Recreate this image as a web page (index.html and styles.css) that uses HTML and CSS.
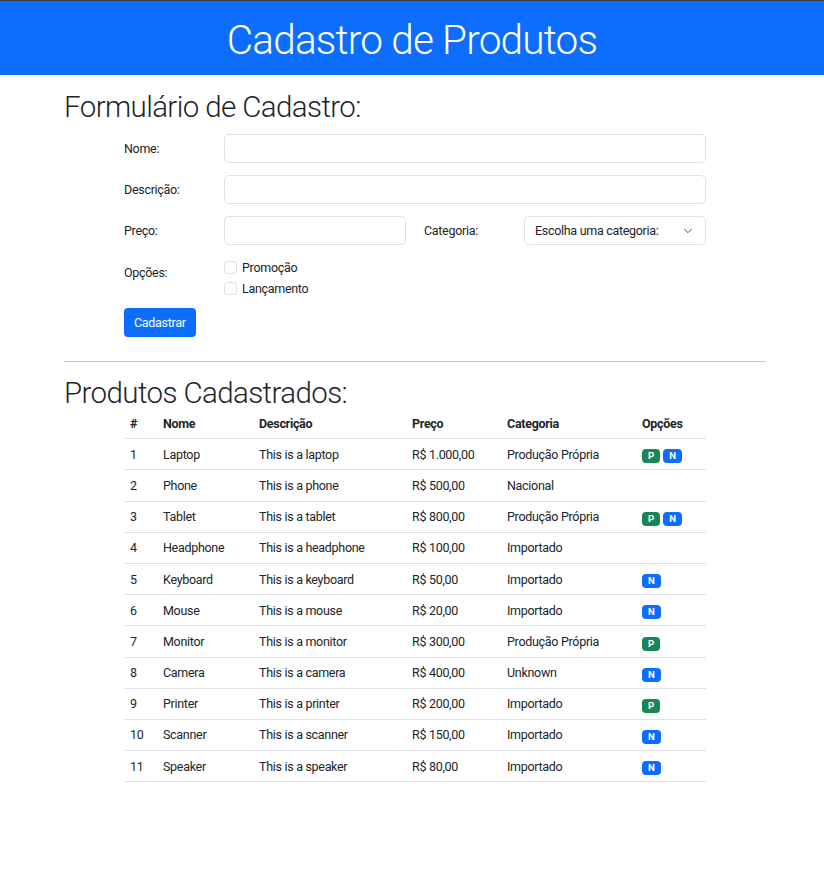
FILE: index.html
```html
<!DOCTYPE html>
<html lang="pt-BR">
<head>
<meta charset="utf-8">
<title>Cadastro de Produtos</title>
<link rel="stylesheet" href="styles.css">
</head>
<body>
<header class="topbar"><h1 class="topbar-title">Cadastro de Produtos</h1></header>
<main class="page">
  <h2 class="section-title first">Formulário de Cadastro:</h2>
  <form class="form">
    <div class="form-row">
      <label class="lbl">Nome:</label>
      <input class="field wide" type="text">
    </div>
    <div class="form-row">
      <label class="lbl">Descrição:</label>
      <input class="field wide" type="text">
    </div>
    <div class="form-row">
      <label class="lbl">Preço:</label>
      <input class="field half" type="text">
      <label class="lbl lbl-second">Categoria:</label>
      <div class="select">
        <span>Escolha uma categoria:</span>
        <svg class="chev" width="10" height="6" viewBox="0 0 10 6"><path d="M1.5 1.2l3.5 3.5 3.5-3.5" fill="none" stroke="#495057" stroke-width="1" stroke-linecap="round" stroke-linejoin="round"/></svg>
      </div>
    </div>
    <div class="form-row opts-row">
      <span class="lbl opts-lbl">Opções:</span>
      <div class="checks">
        <label class="check"><span class="box"></span>Promoção</label>
        <label class="check"><span class="box"></span>Lançamento</label>
      </div>
    </div>
    <button class="btn" type="button">Cadastrar</button>
  </form>
  <hr class="divider">
  <h2 class="section-title second">Produtos Cadastrados:</h2>
  <table class="products">
    <colgroup>
      <col class="c-id"><col class="c-name"><col class="c-desc"><col class="c-price"><col class="c-cat"><col class="c-opt">
    </colgroup>
    <thead>
      <tr><th>#</th><th>Nome</th><th>Descrição</th><th>Preço</th><th>Categoria</th><th>Opções</th></tr>
    </thead>
    <tbody>
      <tr><td>1</td><td>Laptop</td><td>This is a laptop</td><td>R$ 1.000,00</td><td>Produção Própria</td><td><span class="badge p">P</span><span class="badge n">N</span></td></tr>
      <tr><td>2</td><td>Phone</td><td>This is a phone</td><td>R$ 500,00</td><td>Nacional</td><td></td></tr>
      <tr><td>3</td><td>Tablet</td><td>This is a tablet</td><td>R$ 800,00</td><td>Produção Própria</td><td><span class="badge p">P</span><span class="badge n">N</span></td></tr>
      <tr><td>4</td><td>Headphone</td><td>This is a headphone</td><td>R$ 100,00</td><td>Importado</td><td></td></tr>
      <tr><td>5</td><td>Keyboard</td><td>This is a keyboard</td><td>R$ 50,00</td><td>Importado</td><td><span class="badge n">N</span></td></tr>
      <tr><td>6</td><td>Mouse</td><td>This is a mouse</td><td>R$ 20,00</td><td>Importado</td><td><span class="badge n">N</span></td></tr>
      <tr><td>7</td><td>Monitor</td><td>This is a monitor</td><td>R$ 300,00</td><td>Produção Própria</td><td><span class="badge p">P</span></td></tr>
      <tr><td>8</td><td>Camera</td><td>This is a camera</td><td>R$ 400,00</td><td>Unknown</td><td><span class="badge n">N</span></td></tr>
      <tr><td>9</td><td>Printer</td><td>This is a printer</td><td>R$ 200,00</td><td>Importado</td><td><span class="badge p">P</span></td></tr>
      <tr><td>10</td><td>Scanner</td><td>This is a scanner</td><td>R$ 150,00</td><td>Importado</td><td><span class="badge n">N</span></td></tr>
      <tr><td>11</td><td>Speaker</td><td>This is a speaker</td><td>R$ 80,00</td><td>Importado</td><td><span class="badge n">N</span></td></tr>
    </tbody>
  </table>
</main>
</body>
</html>
```
FILE: styles.css
```css
* { box-sizing: border-box; }
body {
  margin: 0;
  font-family: Roboto, "Liberation Sans", sans-serif;
  font-size: 12.5px;
  letter-spacing: -0.3px;
  color: #212529;
  background: #fff;
}
.topbar {
  border-top: 1px solid #3a3a3a;
  background: #0d6efd;
  height: 75px;
  display: flex;
  align-items: center;
  justify-content: center;
  padding-top: 5px;
}
.topbar-title {
  margin: 0;
  color: #fff;
  font-weight: 300;
  font-size: 40.5px;
  letter-spacing: -0.8px;
  line-height: 1;
}
.page {
  padding: 0 58px 0 64px;
}
.section-title {
  font-weight: 300;
  font-size: 29.5px;
  letter-spacing: -0.6px;
  line-height: 34px;
  margin: 0;
}
.section-title.first { margin-top: 15px; }
.section-title.second { margin-top: 14px; }
.form {
  margin: 10px 0 0 60px;
  width: 582px;
}
.form-row {
  display: flex;
  align-items: center;
  margin-bottom: 12px;
}
.lbl {
  width: 100px;
  flex: none;
  line-height: 19px;
}
.lbl-second { margin-left: 18px; }
.field {
  height: 29px;
  border: 1px solid #dee2e6;
  border-radius: 5px;
  font: inherit;
  padding: 0 10px;
  background: #fff;
}
.field.wide { width: 482px; }
.field.half { width: 182px; }
.select {
  width: 182px;
  height: 29px;
  border: 1px solid #dee2e6;
  border-radius: 5px;
  display: flex;
  align-items: center;
  justify-content: space-between;
  padding: 0 12px 0 10px;
}
.chev { display: block; }
.opts-row {
  align-items: flex-start;
  margin-top: 0;
  margin-bottom: 9px;
}
.opts-lbl { padding-top: 6px; }
.checks { display: flex; flex-direction: column; }
.check {
  display: flex;
  align-items: center;
  line-height: 20px;
  height: 21px;
}
.box {
  width: 13px;
  height: 13px;
  border: 1px solid #dee2e6;
  border-radius: 3px;
  margin-right: 5px;
  flex: none;
}
.btn {
  height: 29px;
  padding: 0 10px;
  background: #0d6efd;
  color: #fff;
  border: 0;
  border-radius: 4px;
  font: inherit;
  letter-spacing: -0.3px;
}
.divider {
  margin: 24px 0 0 0;
  border: 0;
  border-top: 1px solid #c8c8c8;
  height: 0;
}
.products {
  margin: -2px 0 0 60px;
  width: 582px;
  border-collapse: collapse;
  table-layout: fixed;
}
.c-id { width: 33px; }
.c-name { width: 96px; }
.c-desc { width: 153px; }
.c-price { width: 95px; }
.c-cat { width: 135px; }
.c-opt { width: 70px; }
.products th, .products td {
  text-align: left;
  padding: 5.6px 6px;
  line-height: 19px;
  border-bottom: 1px solid #dee2e6;
  white-space: nowrap;
  vertical-align: middle;
}
.products th { font-weight: 700; }
.badge {
  display: inline-block;
  vertical-align: middle;
  font-size: 9.6px;
  font-weight: 700;
  letter-spacing: 0;
  line-height: 10px;
  padding: 2px 6px;
  border-radius: 4px;
  color: #fff;
  margin-right: 3px;
  position: relative;
  top: 1px;
}
.badge.p { background: #198754; }
.badge.n { background: #0d6efd; }
```
